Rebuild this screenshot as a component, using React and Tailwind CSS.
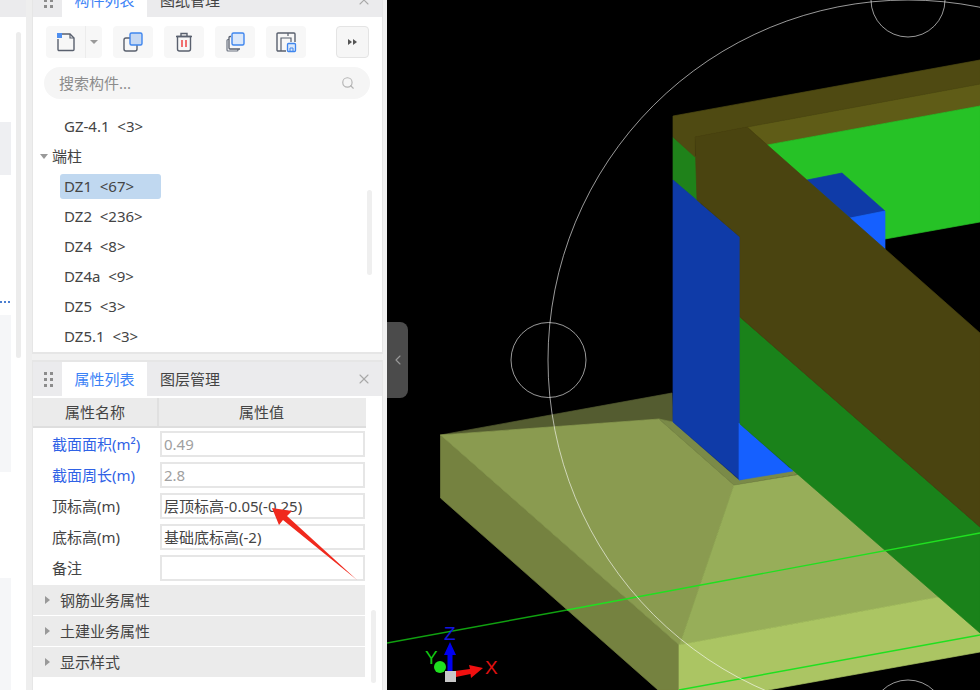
import React from 'react';
import { X, Search, ChevronLeft } from 'lucide-react';

const FONT = 'font-["Noto_Sans","Noto_Sans_CJK_SC",sans-serif]';

const listItems = [
  { name: 'GZ-4.1', count: '<3>' },
  { group: '端柱' },
  { name: 'DZ1', count: '<67>', selected: true },
  { name: 'DZ2', count: '<236>' },
  { name: 'DZ4', count: '<8>' },
  { name: 'DZ4a', count: '<9>' },
  { name: 'DZ5', count: '<3>' },
  { name: 'DZ5.1', count: '<3>' },
];

const propRows = [
  { label: '截面面积(m²)', value: '0.49', linked: true },
  { label: '截面周长(m)', value: '2.8', linked: true },
  { label: '顶标高(m)', value: '层顶标高-0.05(-0.25)' },
  { label: '底标高(m)', value: '基础底标高(-2)' },
  { label: '备注', value: '' },
];

const groups = ['钢筋业务属性', '土建业务属性', '显示样式'];

function Grip() {
  return (
    <div className="grid w-[9px] grid-cols-2 gap-x-[3px] gap-y-[3px]">
      {[0, 1, 2, 3, 4, 5].map(i => (
        <span key={i} className="h-[3px] w-[3px] bg-[#8c8c8c]" />
      ))}
    </div>
  );
}

function Tabs({ first, second }) {
  return (
    <div className="flex h-[34px] shrink-0 items-stretch bg-[#ebebed]">
      <div className="flex w-[29px] items-center justify-center pl-[2px]">
        <Grip />
      </div>
      <div className="flex w-[85px] items-center justify-center bg-white text-[15px] text-[#3b82f6]">{first}</div>
      <div className="flex items-center pl-[13px] text-[15px] text-[#444]">{second}</div>
      <div className="ml-auto flex w-[37px] items-center justify-center text-[#a8a8a8]">
        <X size={16} strokeWidth={1.6} />
      </div>
    </div>
  );
}

function ToolButton({ children }) {
  return <button className="flex h-[32px] w-[40px] items-center justify-center rounded-[4px] bg-[#f7f7f7]">{children}</button>;
}

function Toolbar() {
  return (
    <div className="flex h-[32px] items-center pl-[13px] pr-[13px]">
      <div className="flex h-[32px] w-[56px] rounded-[4px] bg-[#f7f7f7]">
        <div className="flex w-[40px] items-center justify-center border-r border-[#ececec]">
          <svg width="22" height="22" viewBox="0 0 22 22" fill="none">
            <path d="M6 3h9l4 4v11.5a1 1 0 0 1-1 1H4a1 1 0 0 1-1-1V8" stroke="#59606e" strokeWidth="1.4" />
            <path d="M15 3v4h4" stroke="#59606e" strokeWidth="1.2" />
            <rect x="2" y="2" width="5" height="5" fill="#4f8ff0" />
          </svg>
        </div>
        <div className="flex flex-1 items-center justify-center">
          <span className="h-0 w-0 border-x-[4px] border-t-[4px] border-x-transparent border-t-[#999]" />
        </div>
      </div>
      <div className="ml-[11px] flex gap-[11px]">
        <ToolButton>
          <svg width="22" height="22" viewBox="0 0 22 22" fill="none">
            <rect x="2" y="7" width="13" height="13" rx="2" stroke="#59606e" strokeWidth="1.4" />
            <rect x="8" y="2" width="12" height="12" rx="1.5" fill="#c5d8f3" stroke="#3f86ee" strokeWidth="1.4" />
          </svg>
        </ToolButton>
        <ToolButton>
          <svg width="22" height="22" viewBox="0 0 22 22" fill="none">
            <path d="M3 5.5h16M8 5V2.5h6V5" stroke="#59606e" strokeWidth="1.4" />
            <path d="M4.5 5.5h13V18a2 2 0 0 1-2 2h-9a2 2 0 0 1-2-2z" stroke="#59606e" strokeWidth="1.4" />
            <path d="M9 9v7M13 9v7" stroke="#ef4444" strokeWidth="1.5" />
          </svg>
        </ToolButton>
        <ToolButton>
          <svg width="22" height="22" viewBox="0 0 22 22" fill="none">
            <path d="M5 8.5H4a1 1 0 0 0-1 1V19a1 1 0 0 0 1 1h9a1 1 0 0 0 1-1v-1" stroke="#6b7280" strokeWidth="1.2" />
            <path d="M7 5.5H6a1 1 0 0 0-1 1V17a1 1 0 0 0 1 1h10" stroke="#59606e" strokeWidth="1.3" />
            <rect x="8" y="2" width="12" height="12" rx="1.5" fill="#dbe8fa" stroke="#3f86ee" strokeWidth="1.4" />
          </svg>
        </ToolButton>
        <ToolButton>
          <svg width="22" height="22" viewBox="0 0 22 22" fill="none">
            <path d="M11 20H3a1 1 0 0 1-1-1V3a1 1 0 0 1 1-1h16a1 1 0 0 1 1 1v8" stroke="#59606e" strokeWidth="1.4" />
            <path d="M6 20V7h10v4M13 2v3" stroke="#59606e" strokeWidth="1.2" />
            <rect x="12.5" y="12.5" width="8" height="8" rx="1" fill="#dbe8fa" stroke="#3f86ee" strokeWidth="1.3" />
            <path d="M15 20v-3h3v3" stroke="#3f86ee" strokeWidth="1" />
          </svg>
        </ToolButton>
      </div>
      <button className="ml-auto flex h-[32px] w-[33px] items-center justify-center gap-[1px] rounded-[4px] border border-[#e4e4e4] bg-[#f6f6f6]">
        <span className="h-0 w-0 border-y-[3.5px] border-l-[4px] border-y-transparent border-l-[#555]" />
        <span className="h-0 w-0 border-y-[3.5px] border-l-[4px] border-y-transparent border-l-[#555]" />
      </button>
    </div>
  );
}

function TreeRow({ item }) {
  if (item.group) {
    return (
      <div className="flex h-[30px] items-center pl-[7px] text-[15px] text-[#444]">
        <span className="mr-[4px] h-0 w-0 border-x-[4px] border-t-[5px] border-x-transparent border-t-[#999]" />
        {item.group}
      </div>
    );
  }
  return (
    <div className="flex h-[30px] items-center pl-[27px]">
      <div className={`flex h-[25px] items-center whitespace-pre rounded-[3px] pl-[4px] text-[15px] text-[#444] ${item.selected ? 'w-[101px] bg-[#c0d8f0]' : ''}`}>
        {item.name}  {item.count}
      </div>
    </div>
  );
}

function PropRow({ row }) {
  const readonly = row.linked;
  return (
    <div className="flex h-[26px] items-center">
      <div className={`w-[127px] pl-[19px] text-[15px] ${readonly ? 'text-[#2f62e6]' : 'text-[#444]'}`}>{row.label}</div>
      <div className={`flex h-[26px] w-[205px] items-center border-2 border-[#e6e6e6] bg-white pl-[2px] text-[15px] ${readonly ? 'text-[#a0a0a0]' : 'text-[#444]'}`}>
        {row.value}
      </div>
    </div>
  );
}

function LeftStrip() {
  return (
    <div className="flex w-[32px] shrink-0 flex-col bg-[#eeeeee]">
      <div className="h-[17px] w-[26px] bg-[#ebebed]" />
      <div className="flex w-[26px] flex-1 bg-white">
        <div className="w-[11px]">
          <div className="mt-[105px] h-[53px] bg-[#eeeff2]" />
          <div className="mt-[119px] flex h-[16px] items-center gap-[2px]">
            <span className="h-[2px] w-[2px] bg-[#4c7fd0]" />
            <span className="h-[2px] w-[2px] bg-[#4c7fd0]" />
            <span className="h-[2px] w-[2px] bg-[#4c7fd0]" />
          </div>
          <div className="mt-[5px] h-[157px] bg-[#f5f6f8]" />
          <div className="mt-[106px] h-[112px] bg-[#f5f6f8]" />
        </div>
        <div className="ml-[5px] mt-[15px] h-[326px] w-[5px] rounded-full bg-[#ececec]" />
      </div>
    </div>
  );
}

// own-colour stroke closes the hairline seams between neighbouring faces
function Face({ c, d }) {
  return <path fill={c} stroke={c} strokeWidth="0.7" d={d} />;
}

function Viewport() {
  return (
    <svg viewBox="387 0 593 690" className="h-full w-full bg-black" fontFamily="Liberation Sans, sans-serif">
      <Face c="#5f5c17" d="M747 127 980 84V106L767 145Z" />
      <Face c="#26c226" d="M767 145 980 106V222L885 239 800 200Z" />
      <Face c="#0f3ba8" d="M807 180 842 173 885 211 850 218Z" />
      <Face c="#1560ff" d="M850 218 885 211V252L840 230Z" />
      <Face c="#1f821a" d="M673 137 700 160V204L673 180Z" />
      <Face c="#545c30" d="M440.5 435 672 393 673 422 659 419Z" />
      <Face c="#758240" d="M440.5 435 679 645V690H658L440.5 498Z" />
      <Face c="#8a9b50" d="M440.5 435 659 419 734 485 682 638 679 645Z" />
      <Face c="#97ae59" d="M734 485 796.5 475 810 470 950 590 939 597 679 645 682 638Z" />
      <Face c="#abc563" d="M679 645 939 597 950 590 985 620 980 652 768 690H679Z" />
      <Face c="#7a8a48" d="M659 419 673 422 739 480 790 468 800 474 734 485Z" />
      <Face c="#0f3ba8" d="M673 180 740 237V480L673 422Z" />
      <Face c="#1560ff" d="M739 423 793 471 739 480Z" />
      <Face c="#1a821a" d="M740 317 980 527V633L740 424Z" />
      <Face c="#4f4a12" d="M673 116 980 60V84L747 127 695 137V157L673 137Z" />
      <Face c="#4a4410" d="M695 137 747 127 980 333V527L740 317V237L697 200Z" />
      <path fill="none" stroke="#10a010" strokeWidth="1.4" d="M387 643 567 610" />
      <path fill="none" stroke="#20e020" strokeWidth="1.4" d="M567 610 980 533M679 690 980 635" />
      <g fill="none" stroke="#ffffff" strokeOpacity="0.6" strokeWidth="1">
        <circle cx="908" cy="360" r="360" />
        <circle cx="908" cy="0" r="37" />
        <circle cx="548.5" cy="360" r="37.5" />
        <circle cx="908" cy="717" r="37" />
      </g>
      <path fill="#0000f0" d="M447.5 675V655H444L450 642 456 655H452.5V675Z" />
      <circle cx="440" cy="667" r="6" fill="#1fe01f" />
      <path fill="#f01010" d="M455 671 470 669 469 665 483 668 471 678 470.5 674 456 677Z" />
      <rect x="445" y="671" width="11" height="11" fill="#c8c8c8" />
      <text x="444" y="640" fontSize="19" fill="#1414e0">Z</text>
      <text x="425" y="664" fontSize="19" fill="#12c812">Y</text>
      <text x="485" y="674" fontSize="19" fill="#e01010">X</text>
    </svg>
  );
}

export default function App() {
  return (
    <div className={`relative flex h-[690px] w-[980px] overflow-hidden bg-black ${FONT}`}>
      <LeftStrip />

      <div className="flex w-[355px] shrink-0 flex-col bg-[#f1f1f1] pr-[4px]">
        {/* top panel, its tab row runs off the top of the picture */}
        <div className="-mt-[17px] flex h-[371px] shrink-0 flex-col border-x border-b-2 border-[#e6e6e6] bg-white">
          <Tabs first="构件列表" second="图纸管理" />
          <div className="relative flex-1">
            <div className="pt-[9px]">
              <Toolbar />
            </div>
            <div className="ml-[11px] mt-[9px] flex h-[32px] w-[326px] items-center justify-between rounded-full bg-[#f5f5f5] px-[15px] text-[15px] text-[#8c8c8c]">
              搜索构件...
              <Search size={14} className="text-[#b4b4b4]" />
            </div>
            <div className="mt-[12px]">
              {listItems.map(item => (
                <TreeRow key={item.name || item.group} item={item} />
              ))}
            </div>
            <div className="absolute left-[334px] top-[173px] h-[85px] w-[5px] rounded-full bg-[#efefef]" />
          </div>
        </div>

        {/* property panel */}
        <div className="mt-[6px] flex flex-1 flex-col border-x border-t-2 border-[#e6e6e6] bg-white">
          <Tabs first="属性列表" second="图层管理" />
          <div className="mt-[2px] flex h-[30px] w-[333px] border-b-2 border-[#dedede] bg-[#ebebeb] text-center text-[15px] leading-[28px] text-[#444]">
            <div className="w-[126px] border-r-2 border-[#e0e0e0]">属性名称</div>
            <div className="flex-1 pr-[2px]">属性值</div>
          </div>
          <div className="flex flex-col gap-[5px] pt-[3px]">
            {propRows.map(row => (
              <PropRow key={row.label} row={row} />
            ))}
          </div>
          <div className="mt-[4px] flex w-[332px] flex-col gap-[1px]">
            {groups.map(g => (
              <div key={g} className="flex h-[30px] items-center bg-[#ebebeb] pl-[12px] text-[15px] text-[#444]">
                <span className="mr-[10px] h-0 w-0 border-y-[4px] border-l-[5px] border-y-transparent border-l-[#999]" />
                {g}
              </div>
            ))}
          </div>
          <div className="absolute left-[371px] top-[610px] h-[73px] w-[5px] rounded-full bg-[#efefef]" />
        </div>
      </div>

      <div className="relative flex-1">
        <Viewport />
        <button className="absolute left-0 top-[322px] flex h-[76px] w-[21px] items-center justify-center rounded-r-[8px] bg-[#4b4b4b] text-[#9a9a9a]">
          <ChevronLeft size={16} strokeWidth={1.6} />
        </button>
      </div>

      {/* red annotation arrow drawn over the screenshot */}
      <svg className="absolute left-0 top-0" width="400" height="600" viewBox="0 0 400 600">
        <path fill="#f0291d" d="M272 508 292 511 287 516 357 580 283 520 279 525Z" />
      </svg>
    </div>
  );
}
